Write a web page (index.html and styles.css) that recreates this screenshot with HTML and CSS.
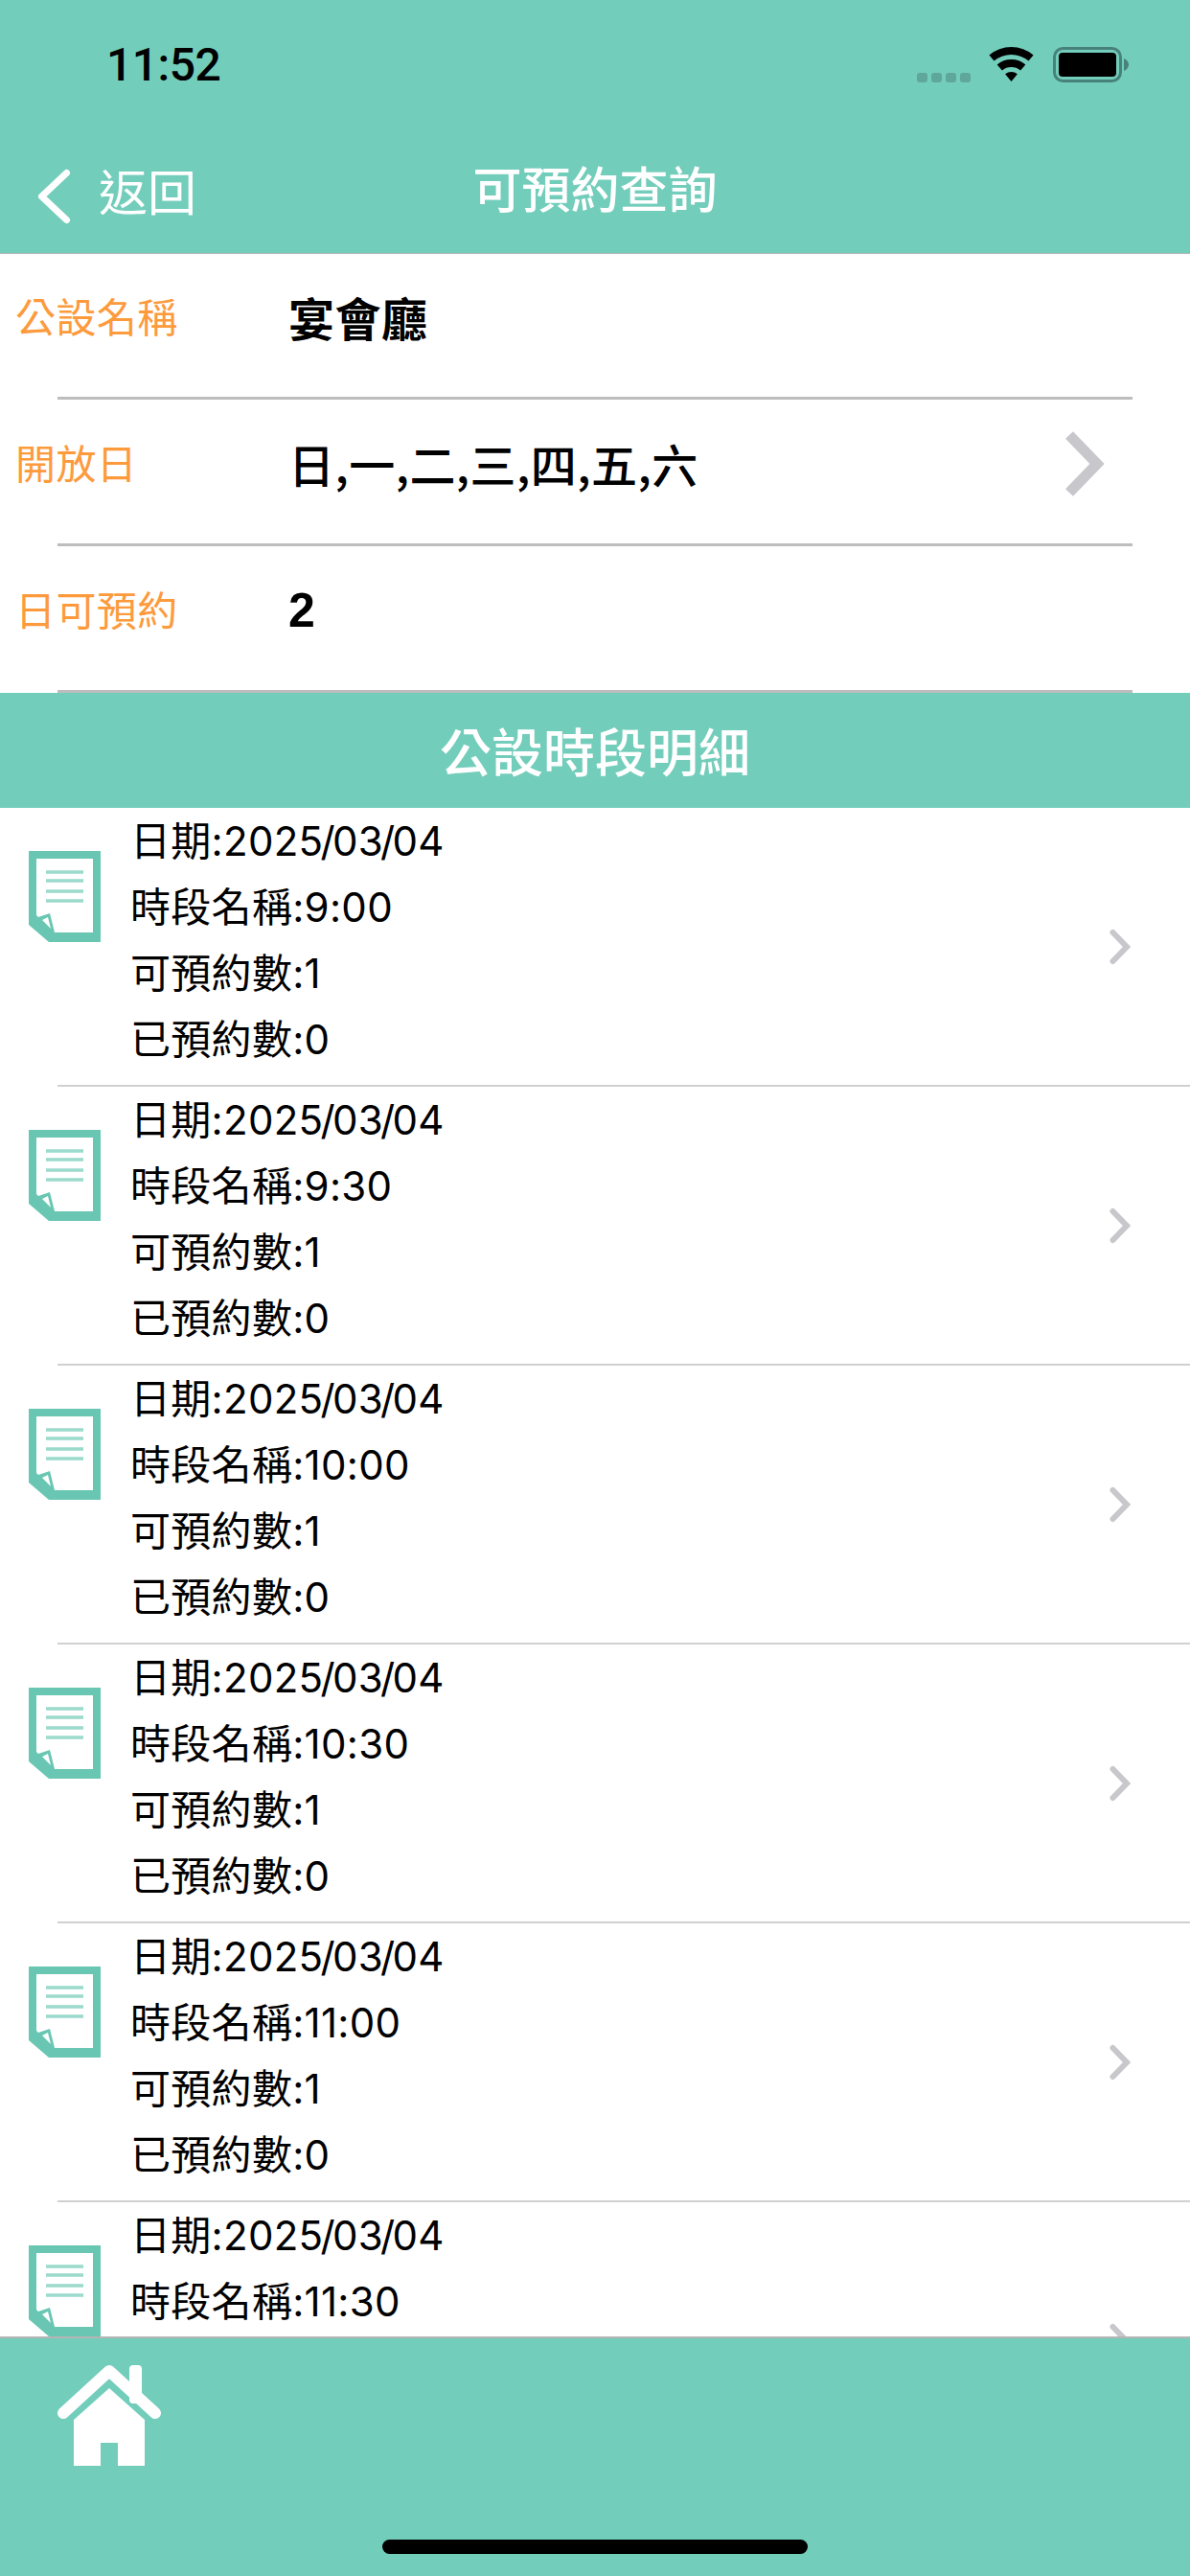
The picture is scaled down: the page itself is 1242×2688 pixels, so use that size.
FILE: index.html
```html
<!DOCTYPE html>
<html lang="zh-Hant">
<head>
<meta charset="utf-8">
<title>可預約查詢</title>
<link rel="stylesheet" href="styles.css">
</head>
<body>
<div class="app">
  <header class="top">
    <div class="status">
      <span class="time">11:52</span>
      <div class="status-icons">
        <div class="signal"><i></i><i></i><i></i><i></i></div>
        <svg class="wifi" width="47" height="36" viewBox="0 0 47 36"><path d="M23.5 36 L17.100 28.300 A10 10 0 0 1 29.900 28.300 Z"/><path d="M13.900 24.500 L8.700 18.400 A23 23 0 0 1 38.300 18.400 L33.100 24.500 A15 15 0 0 0 13.900 24.500 Z"/><path d="M5.500 14.600 L0.400 8.400 A36 36 0 0 1 46.600 8.400 L41.500 14.600 A28 28 0 0 0 5.500 14.600 Z"/></svg>
        <svg class="battery" width="79" height="37" viewBox="0 0 79 37"><rect x="1.500" y="1.500" width="69" height="34" rx="9" fill="none" stroke="#47827a" stroke-width="3"/><rect x="6" y="6" width="60" height="25" rx="4" fill="#000"/><path d="M74 12 C77 13 79 16 79 18.500 C79 21 77 24 74 25 Z" fill="#47827a"/></svg>
      </div>
    </div>
    <nav class="nav">
      <div class="back">
        <svg width="36" height="58" viewBox="0 0 36 58"><path d="M31.500 4.500 L5.500 29 L31.500 53.500" fill="none" stroke="#fff" stroke-width="7" stroke-linecap="round" stroke-linejoin="round"/></svg>
        <span>返回</span>
      </div>
      <h1 class="title">可預約查詢</h1>
    </nav>
  </header>

  <section class="info">
    <div class="info-row"><div class="label">公設名稱</div><div class="value strong">宴會廳</div></div>
    <div class="info-row"><div class="label">開放日</div><div class="value">日,一,二,三,四,五,六</div>
      <svg class="big-chev" width="41" height="68" viewBox="0 0 41 68"><path d="M4 4 L33 34 L4 64" fill="none" stroke="#c7c7cc" stroke-width="11"/></svg>
    </div>
    <div class="info-row"><div class="label">日可預約</div><div class="value num">2</div></div>
  </section>

  <h2 class="section-head">公設時段明細</h2>

  <main class="list" id="list"></main>

  <footer class="bottom">
    <svg class="home" width="108" height="107" viewBox="0 0 108 107"><rect x="75" y="2" width="13" height="40" rx="4" fill="#fff"/><path d="M6 52 L54 8 L102 52" fill="none" stroke="#fff" stroke-width="12" stroke-linecap="round" stroke-linejoin="round"/><path d="M17 59 L54 26 L91 59 V107 H63 V83 H45 V107 H17 Z" fill="#fff"/></svg>
    <div class="home-bar"></div>
  </footer>
</div>
<template id="row">
  <article class="row">
    <svg class="doc" width="75" height="95" viewBox="0 0 75 95"><path d="M0 0 H75 V95 H21 L0 77 Z" fill="#68c6b2"/><path d="M8 8 H67 V85 H27 L22 65 L10 69 L8 67 Z" fill="#fff"/><path d="M14 72 L20 69 L23 81 Z" fill="#fff"/><path d="M18 22 H57 M18 31 H57 M18 42 H57 M18 52 H57" stroke="#9bdacc" stroke-width="3.500"/></svg>
    <div class="lines"><div class="date"></div></div>
    <svg class="chev" width="24" height="38" viewBox="0 0 24 38"><path d="M3.500 4 L18 19 L3.500 34" fill="none" stroke="#c7c7cc" stroke-width="6" stroke-linecap="round"/></svg>
  </article>
</template>
<script src="app.js"></script>
</body>
</html>
```
FILE: app.js
```js
const times = ['9:00', '9:30', '10:00', '10:30', '11:00', '11:30'];
const list = document.getElementById('list');
const tpl = document.getElementById('row');
times.forEach(function (t) {
  const node = tpl.content.cloneNode(true);
  const lines = node.querySelector('.lines');
  node.querySelector('.date').innerHTML = '日期:2025<span class="slash">/</span>03<span class="slash">/</span>04';
  ['時段名稱:' + t, '可預約數:1', '已預約數:0'].forEach(function (s) {
    const d = document.createElement('div');
    d.textContent = s;
    lines.appendChild(d);
  });
  list.appendChild(node);
});
```
FILE: styles.css
```css
* { box-sizing: border-box; margin: 0; padding: 0; }
html, body { width: 1242px; height: 2688px; overflow: hidden; background: #fff; }
body { font-family: "Noto Sans CJK TC", "Noto Sans", sans-serif; color: #000; }
.app { width: 1242px; height: 2688px; display: flex; flex-direction: column; }

.top { height: 265px; background: #73cdbb; border-bottom: 1px solid #b5b5b5; flex: none; }
.status { height: 144px; display: flex; justify-content: space-between; align-items: flex-start; padding: 42px 0 0 111px; }
.time { font-family: Roboto, sans-serif; font-size: 48px; line-height: 52px; font-weight: 500; letter-spacing: -0.5px; }
.status-icons { display: flex; align-items: flex-end; margin-top: 7px; margin-right: 64px; }
.signal { display: flex; gap: 4px; margin-right: 19px; }
.signal i { width: 11px; height: 10px; border-radius: 3px; background: #5fa798; }
.wifi { margin-right: 20px; margin-bottom: 1px; }
.battery { display: block; }
.nav { height: 120px; display: flex; align-items: center; justify-content: center; position: relative; }
.back { position: absolute; left: 38px; top: 25px; display: flex; align-items: center; gap: 29px; color: #fff; font-size: 51px; line-height: 58px; }
.back span { margin-bottom: 14px; }
.title { color: #fff; font-size: 51px; font-weight: 500; line-height: 58px; margin-top: -19px; }

.info { flex: none; }
.info-row { height: 153px; margin-right: 60px; position: relative; display: flex; align-items: center; padding-bottom: 25px; }
.info-row:first-child { height: 152px; }
.info-row::after { content: ""; position: absolute; left: 60px; right: 0; bottom: 0; height: 3px; background: #bdbdbd; }
.label { width: 301px; padding-left: 16px; font-size: 42px; letter-spacing: 0.4px; color: #fd9a3c; }
.value { font-size: 48px; font-weight: 500; letter-spacing: 0.45px; margin-top: 3px; flex: 1; }
.strong { font-weight: 700; }
.num { font-family: "Liberation Sans", sans-serif; font-weight: 700; font-size: 50px; margin-top: 5px; }
.big-chev { position: absolute; right: 29px; top: 33px; }

.section-head { flex: none; height: 120px; background: #73cdbb; color: #fff; text-align: center; font-size: 54px; font-weight: 500; line-height: 120px; }

.list { flex: 1; overflow: hidden; min-height: 0; }
.row { height: 291px; position: relative; display: flex; align-items: flex-start; }
.row::after { content: ""; position: absolute; left: 60px; right: 0; bottom: 0; height: 2px; background: #d0d0d0; }
.doc { margin: 45px 0 0 30px; flex: none; }
.lines { margin-left: 31px; font-family: Inter, "Noto Sans CJK TC", sans-serif; font-size: 42px; line-height: 69px; letter-spacing: 0.3px; flex: 1; }
.slash { margin: 0 -3px; }
.chev { position: absolute; right: 60px; top: 126px; }

.bottom { flex: none; height: 250px; background: #73cdbb; border-top: 2px solid #b5b5b5; position: relative; padding: 26px 0 0 60px; }
.home { display: block; }
.home-bar { position: absolute; left: 399px; bottom: 23px; width: 444px; height: 15px; border-radius: 8px; background: #000; }
```
